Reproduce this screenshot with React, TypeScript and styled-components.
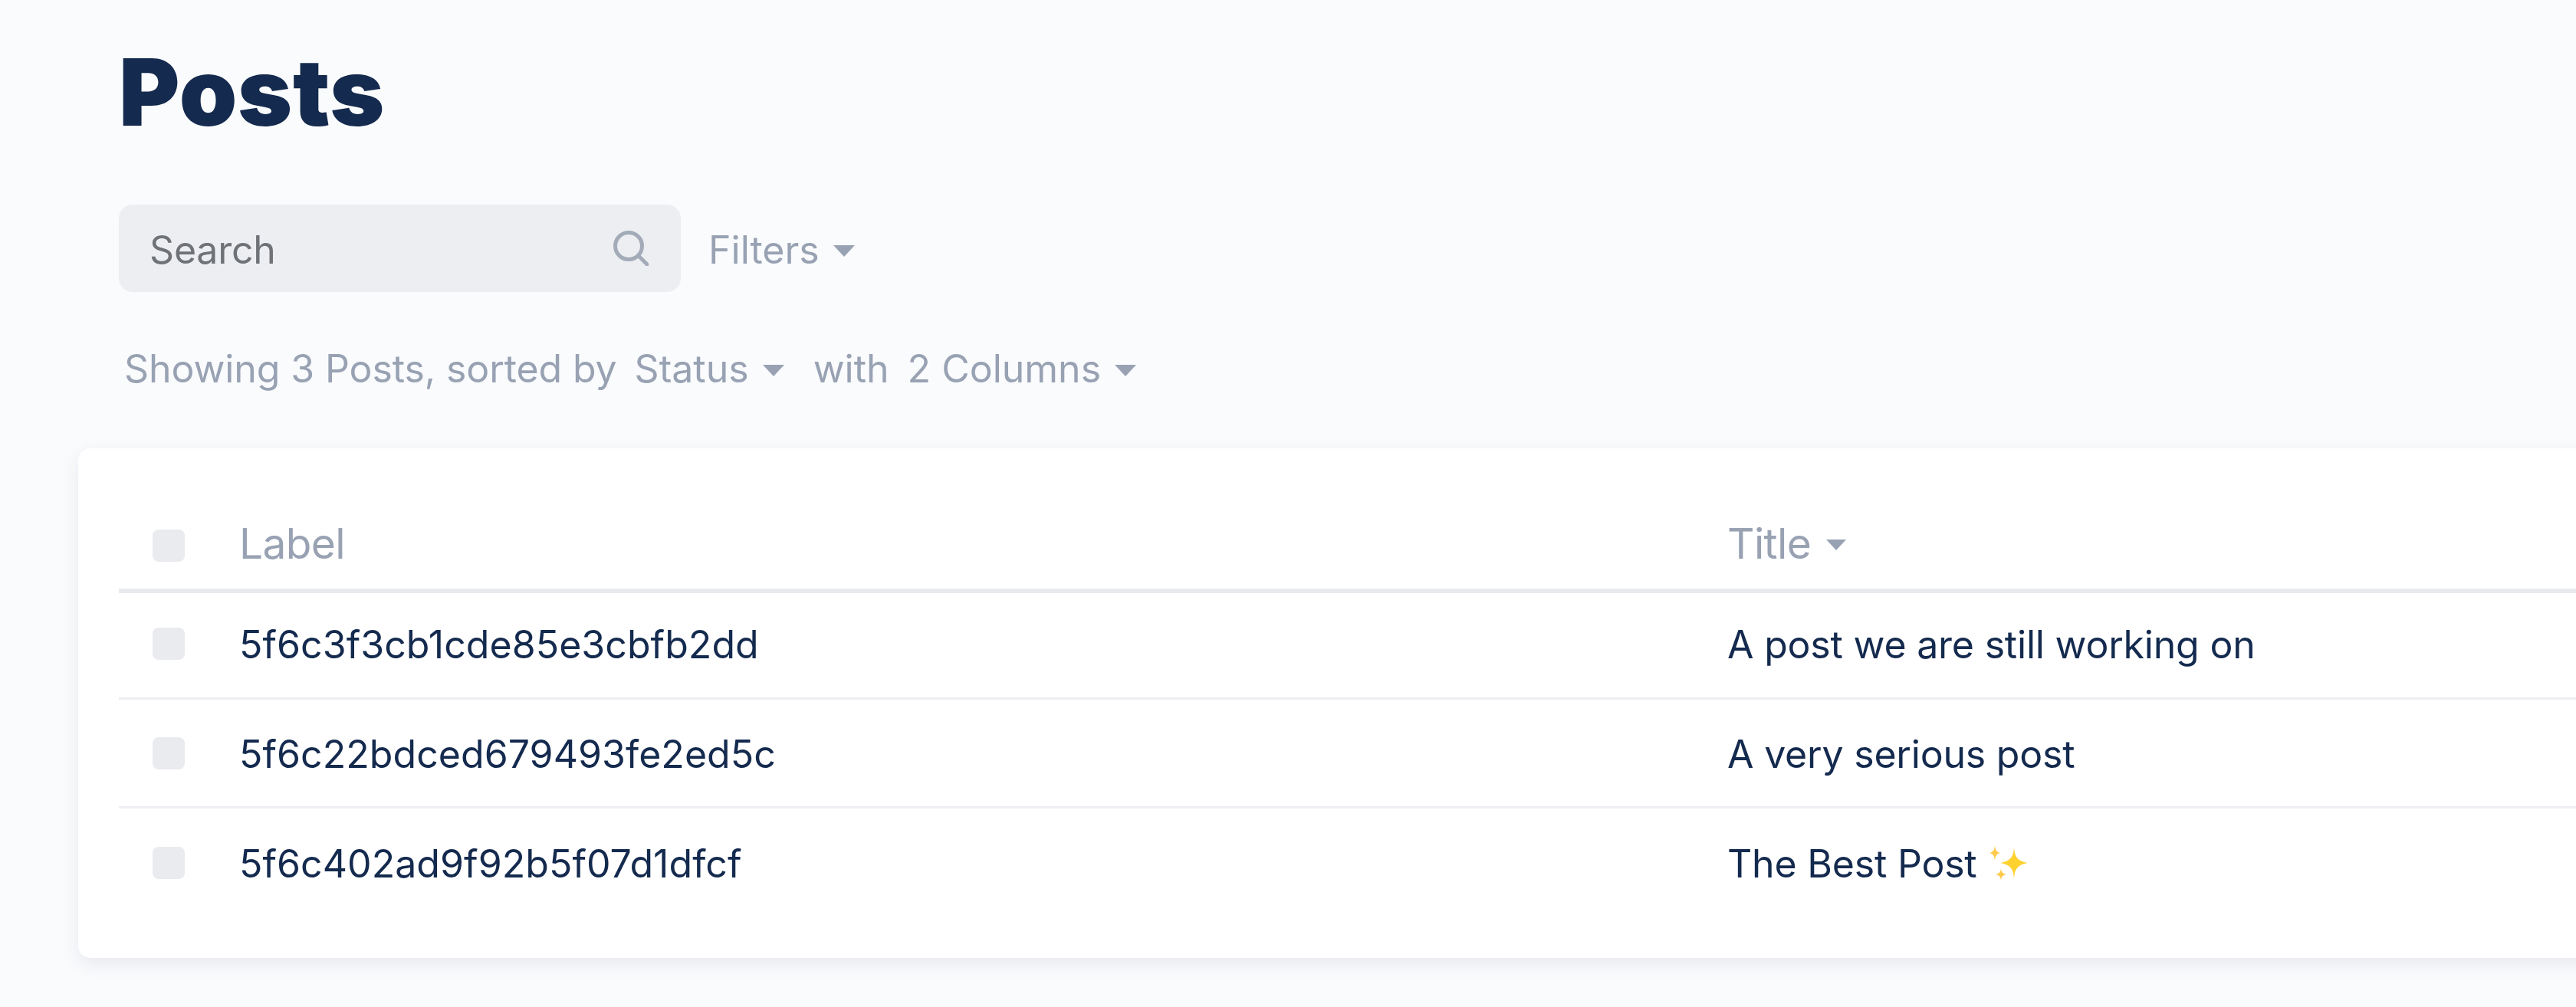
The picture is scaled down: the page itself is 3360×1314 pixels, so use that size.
import React from "react";
import styled, { createGlobalStyle } from "styled-components";

const Global = createGlobalStyle`
  html, body { margin: 0; padding: 0; background: #fafbfd; overflow: hidden; }
  body { font-family: Inter, "Liberation Sans", sans-serif; }
`;

const Page = styled.div`
  width: 3360px;
  height: 1314px;
  overflow: hidden;
  padding-left: 102px;
  box-sizing: border-box;
  background: #fafbfd;
`;

const Header = styled.header`
  padding-left: 53px;
  display: flex;
  flex-direction: column;
  align-items: flex-start;
`;

const Title = styled.h1`
  margin: 47px 0 0 0;
  font-size: 121px;
  line-height: 146px;
  height: 147px;
  font-weight: 900;
  letter-spacing: 0.7px;
  color: #142a4e;
`;

const Toolbar = styled.div`
  margin-top: 73px;
  display: flex;
  align-items: center;
`;

const SearchBox = styled.div`
  width: 733px;
  height: 114px;
  box-sizing: border-box;
  padding: 0 42px 0 40px;
  border-radius: 18px;
  background: #edeef1;
  display: flex;
  align-items: center;
  justify-content: space-between;
  font-size: 50px;
  letter-spacing: -0.2px;
  color: #6f7276;
`;

const SearchLabel = styled.span`
  padding-top: 3px;
`;

const Dropdown = styled.span`
  display: inline-flex;
  align-items: center;
  gap: 18px;
  color: #98a2b3;
  font-size: 50px;
`;

const FilterButton = styled(Dropdown)`
  margin-left: 36px;
  padding-top: 3px;
`;

const Caret = styled.span<{ $size?: number }>`
  display: inline-block;
  width: 0;
  height: 0;
  margin-top: 4px;
  border-left: ${(p) => p.$size ?? 14}px solid transparent;
  border-right: ${(p) => p.$size ?? 14}px solid transparent;
  border-top: ${(p) => (p.$size ?? 14) + 1}px solid #98a2b3;
`;

const Summary = styled.div`
  margin-top: 70px;
  margin-left: 7px;
  display: flex;
  align-items: center;
  height: 60px;
  font-size: 50px;
  letter-spacing: -0.1px;
  color: #98a2b3;
`;

const SummaryItem = styled(Dropdown)<{ $ml: number }>`
  margin-left: ${(p) => p.$ml}px;
  letter-spacing: 0;
`;

const Card = styled.section`
  margin-top: 74px;
  margin-right: -60px;
  height: 665px;
  box-sizing: border-box;
  padding: 70px 0 0 53px;
  background: #fff;
  border-radius: 16px;
  box-shadow: 0 8px 22px rgba(40, 55, 80, 0.09);
`;

const Row = styled.div`
  display: grid;
  grid-template-columns: 157px 1941px 1fr;
  align-items: center;
  height: 139px;
  border-bottom: 3px solid #eeeff2;
  font-size: 50px;
  color: #142a4e;

  &:last-child {
    border-bottom: none;
    height: 141px;
  }
`;

const FirstRow = styled(Row)`
  height: 131px;
  padding-bottom: 5px;
`;

const HeadRow = styled(Row)`
  height: 113px;
  border-bottom: 6px solid #e9eaee;
  font-size: 55px;
  color: #98a2b3;
`;

const CheckCell = styled.div`
  padding-left: 44px;
  display: flex;
`;

const Check = styled.span`
  width: 42px;
  height: 42px;
  border-radius: 8px;
  background: #eaebef;
`;

const HeadCell = styled.div`
  display: flex;
  align-items: center;
  gap: 20px;
  padding-bottom: 5px;
  letter-spacing: -0.6px;
`;

const IdCell = styled.div`
  padding-top: 3px;
  letter-spacing: 0.06px;
`;

const TitleCell = styled.div`
  display: flex;
  align-items: center;
  padding-top: 3px;
  letter-spacing: -0.2px;
`;

const SparkleIcon = styled.svg`
  margin-left: 16px;
  flex: none;
  margin-top: -3px;
`;

const Sparkles = () => (
  <SparkleIcon width="50" height="46" viewBox="0 0 50 46" aria-hidden>
    <path d="M32 2 C32.8 14 35 20 50 23 C35 26 32.8 32 32 44 C31.2 32 29 26 14 23 C29 20 31.2 14 32 2Z" fill="#fdd22f" />
    <path d="M7 0 C7.5 6 9 8.6 14 10 C9 11.4 7.5 14 7 20 C6.5 14 5 11.4 0 10 C5 8.6 6.5 6 7 0Z" fill="#fdc94a" />
    <path d="M15 30 C15.5 35 17 37 22 38 C17 39 15.5 41 15 46 C14.5 41 13 39 8 38 C13 37 14.5 35 15 30Z" fill="#fdc94a" />
  </SparkleIcon>
);

const SearchIcon = () => (
  <svg width="46" height="46" viewBox="0 0 46 46" fill="none" stroke="#a3abb9" strokeWidth="5" strokeLinecap="round" aria-hidden>
    <circle cx="20" cy="20" r="17.5" />
    <path d="M33 33 L44 44" />
  </svg>
);

const rows = [
  ["5f6c3f3cb1cde85e3cbfb2dd", "A post we are still working on"],
  ["5f6c22bdced679493fe2ed5c", "A very serious post"],
  ["5f6c402ad9f92b5f07d1dfcf", "The Best Post"],
];

export default function App() {
  return (
    <Page>
      <Global />
      <Header>
        <Title>Posts</Title>
        <Toolbar>
          <SearchBox>
            <SearchLabel>Search</SearchLabel>
            <SearchIcon />
          </SearchBox>
          <FilterButton>
            Filters
            <Caret />
          </FilterButton>
        </Toolbar>
        <Summary>
          Showing 3 Posts, sorted by
          <SummaryItem $ml={23}>
            Status
            <Caret />
          </SummaryItem>
          <SummaryItem $ml={38}>with</SummaryItem>
          <SummaryItem $ml={24}>
            2 Columns
            <Caret />
          </SummaryItem>
        </Summary>
      </Header>
      <Card>
        <HeadRow>
          <CheckCell>
            <Check />
          </CheckCell>
          <HeadCell>Label</HeadCell>
          <HeadCell>
            Title
            <Caret $size={13} />
          </HeadCell>
        </HeadRow>
        {rows.map(([id, title], i) => {
          const RowKind = i === 0 ? FirstRow : Row;
          return (
            <RowKind key={id}>
              <CheckCell>
                <Check />
              </CheckCell>
              <IdCell>{id}</IdCell>
              <TitleCell>
                {title}
                {i === 2 && <Sparkles />}
              </TitleCell>
            </RowKind>
          );
        })}
      </Card>
    </Page>
  );
}
